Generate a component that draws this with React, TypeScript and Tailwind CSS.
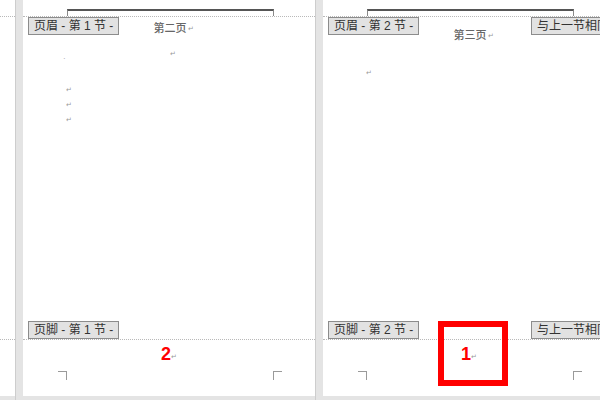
import React from "react";

const Mark = ({ className = "" }: { className?: string }) => (
  <span className={`text-[7px] leading-none text-[#999] ${className}`}>↵</span>
);

const Tag = ({ label }: { label: string }) => (
  <div className="flex h-[18px] items-center whitespace-nowrap border border-[#8c8c8c] bg-[#e2e2e2] px-[5px] text-[12px] leading-none text-[#333]">
    {label}
  </div>
);

const Corners = () => (
  <div className="flex pl-[35px] pt-[6px]">
    <div className="h-[9px] w-[9px] border-r border-t border-[#9a9a9a]" />
    <div className="ml-[206px] h-[9px] w-[9px] border-l border-t border-[#9a9a9a]" />
  </div>
);

const Page = ({
  section,
  title,
  titleDrop,
  pageNo,
  linked,
  highlight,
  children,
}: {
  section: number;
  title: string;
  titleDrop: boolean;
  pageNo: string;
  linked: boolean;
  highlight?: boolean;
  children?: React.ReactNode;
}) => (
  <div className="relative flex h-[396px] w-[292px] shrink-0 flex-col bg-white">
    <div className="h-[16px] pl-[44px] pt-[9px]">
      <div className="h-[7px] w-[207px] border-x border-t-2 border-x-[#8a8a8a] border-t-[#555]" />
    </div>
    <div className="border-t border-dotted border-[#b9b9b9]" />
    <div className="grid grid-cols-[1fr_auto_1fr] items-start pl-[5px]">
      <div className="flex">
        <Tag label={`页眉 - 第 ${section} 节 -`} />
      </div>
      <div
        className={`ml-[4px] flex items-center gap-[1px] text-[11px] font-medium text-[#666] ${
          titleDrop ? "mt-[10px]" : "mt-[3px]"
        }`}
      >
        {title}
        <Mark />
      </div>
      <div className="flex justify-end">
        {linked && <Tag label="与上一节相同" />}
      </div>
    </div>
    <div className="flex-1">{children}</div>
    <div className="flex items-end justify-between pl-[5px]">
      <Tag label={`页脚 - 第 ${section} 节 -`} />
      {linked && <Tag label="与上一节相同" />}
    </div>
    <div className="border-t border-dotted border-[#b9b9b9]" />
    <div className="h-[56px]">
      <div className="flex items-end justify-center pt-[3px]">
        <span className="text-[18px] font-bold leading-[22px] text-[#ff0000]">{pageNo}</span>
        <Mark className="mb-[5px]" />
      </div>
      <Corners />
    </div>
    {highlight && (
      <div className="absolute left-[115px] top-[321px] h-[65px] w-[70px] border-[6px] border-[#ff0000]" />
    )}
  </div>
);

const Gap = () => (
  <div className="h-[400px] w-[8px] shrink-0 border-l border-[#cdcdcd] bg-[#e4e4e4]" />
);

export default function App() {
  return (
    <div
      className="flex h-[400px] w-[600px] overflow-hidden bg-[#e4e4e4]"
      style={{ fontFamily: '"Liberation Sans", "Noto Sans CJK SC", sans-serif' }}
    >
      <div className="flex h-[396px] w-[15px] shrink-0 flex-col bg-white">
        <div className="h-[16px]" />
        <div className="border-t border-dotted border-[#b9b9b9]" />
        <div className="h-[322px]" />
        <div className="border-t border-dotted border-[#b9b9b9]" />
      </div>
      <Gap />
      <Page section={1} title="第二页" titleDrop={false} pageNo="2" linked={false}>
        <div className="relative flex h-[26px] items-end">
          <span className="ml-[40px] text-[8px] leading-none text-[#999]">·</span>
          <Mark className="mb-[6px] ml-[104px]" />
        </div>
        <div className="flex flex-col gap-[8px] pl-[43px] pt-[23px]">
          <Mark />
          <Mark />
          <Mark />
        </div>
      </Page>
      <Gap />
      <Page section={2} title="第三页" titleDrop pageNo="1" linked highlight>
        <div className="pl-[43px] pt-[14px]">
          <Mark />
        </div>
      </Page>
    </div>
  );
}
